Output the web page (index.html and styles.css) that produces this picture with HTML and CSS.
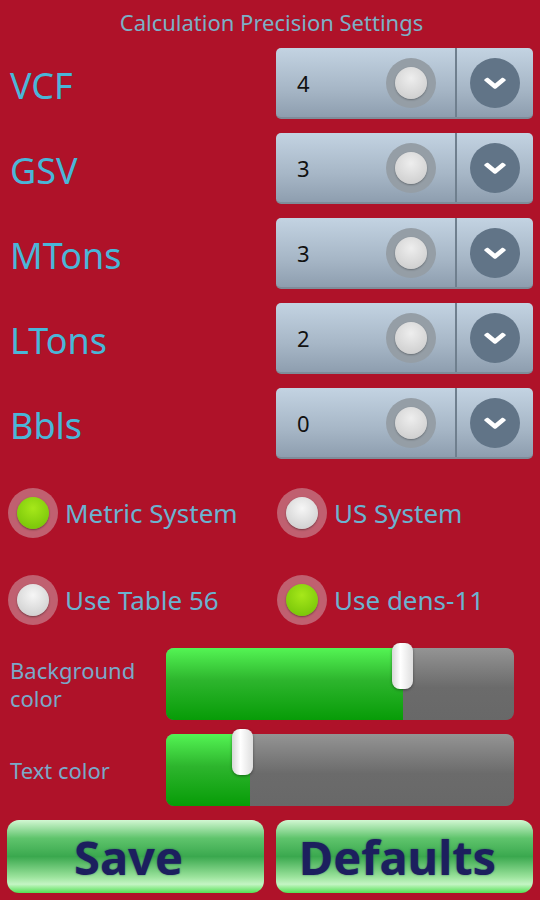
FILE: index.html
```html
<!DOCTYPE html>
<html lang="en">
<head>
    <meta charset="UTF-8">
    <meta name="viewport" content="width=device-width, initial-scale=1.0">
    <title>Precision Settings</title>
    <link rel="stylesheet" href="styles.css">
</head>
<body>
    <div class="screen">
        <h1 class="title">Calculation Precision Settings</h1>

        <!-- Precision spinners -->
        <div class="precision-list">
            <div class="precision-row">
                <span class="precision-label">VCF</span>
                <div class="spinner">
                    <span class="spinner-value">4</span>
                    <span class="spinner-knob"><span class="knob-inner"></span></span>
                    <span class="spinner-arrow">
                        <svg width="24" height="14" viewBox="0 0 24 14"><path d="M3 3 L12 10.5 L21 3" fill="none" stroke="#fff" stroke-width="4.5" stroke-linecap="round" stroke-linejoin="round"/></svg>
                    </span>
                </div>
            </div>
            <div class="precision-row">
                <span class="precision-label">GSV</span>
                <div class="spinner">
                    <span class="spinner-value">3</span>
                    <span class="spinner-knob"><span class="knob-inner"></span></span>
                    <span class="spinner-arrow">
                        <svg width="24" height="14" viewBox="0 0 24 14"><path d="M3 3 L12 10.5 L21 3" fill="none" stroke="#fff" stroke-width="4.5" stroke-linecap="round" stroke-linejoin="round"/></svg>
                    </span>
                </div>
            </div>
            <div class="precision-row">
                <span class="precision-label">MTons</span>
                <div class="spinner">
                    <span class="spinner-value">3</span>
                    <span class="spinner-knob"><span class="knob-inner"></span></span>
                    <span class="spinner-arrow">
                        <svg width="24" height="14" viewBox="0 0 24 14"><path d="M3 3 L12 10.5 L21 3" fill="none" stroke="#fff" stroke-width="4.5" stroke-linecap="round" stroke-linejoin="round"/></svg>
                    </span>
                </div>
            </div>
            <div class="precision-row">
                <span class="precision-label">LTons</span>
                <div class="spinner">
                    <span class="spinner-value">2</span>
                    <span class="spinner-knob"><span class="knob-inner"></span></span>
                    <span class="spinner-arrow">
                        <svg width="24" height="14" viewBox="0 0 24 14"><path d="M3 3 L12 10.5 L21 3" fill="none" stroke="#fff" stroke-width="4.5" stroke-linecap="round" stroke-linejoin="round"/></svg>
                    </span>
                </div>
            </div>
            <div class="precision-row">
                <span class="precision-label">Bbls</span>
                <div class="spinner">
                    <span class="spinner-value">0</span>
                    <span class="spinner-knob"><span class="knob-inner"></span></span>
                    <span class="spinner-arrow">
                        <svg width="24" height="14" viewBox="0 0 24 14"><path d="M3 3 L12 10.5 L21 3" fill="none" stroke="#fff" stroke-width="4.5" stroke-linecap="round" stroke-linejoin="round"/></svg>
                    </span>
                </div>
            </div>
        </div>

        <!-- Radio groups -->
        <div class="radio-row">
            <label class="radio"><span class="radio-ring"><span class="radio-dot checked"></span></span>Metric System</label>
            <label class="radio"><span class="radio-ring"><span class="radio-dot"></span></span>US System</label>
        </div>
        <div class="radio-row second">
            <label class="radio"><span class="radio-ring"><span class="radio-dot"></span></span>Use Table 56</label>
            <label class="radio"><span class="radio-ring"><span class="radio-dot checked"></span></span>Use dens-11</label>
        </div>

        <!-- Colour sliders -->
        <div class="slider-row">
            <span class="slider-label">Background<br>color</span>
            <div class="slider">
                <div class="slider-fill" style="width: 68%"></div>
                <div class="slider-thumb" style="left: 65%"></div>
            </div>
        </div>
        <div class="slider-row">
            <span class="slider-label">Text color</span>
            <div class="slider">
                <div class="slider-fill" style="width: 24%"></div>
                <div class="slider-thumb" style="left: 19%"></div>
            </div>
        </div>

        <div class="button-row">
            <button class="big-button">Save</button>
            <button class="big-button">Defaults</button>
        </div>
    </div>
</body>
</html>
```

FILE: styles.css
```css
body {
    margin: 0;
    background-color: #af1229;
    font-family: 'Noto Sans', 'Open Sans', sans-serif;
}
.screen {
    width: 540px;
    height: 900px;
    padding: 0 7px 0 10px;
    box-sizing: border-box;
    overflow: hidden;
}
.title {
    margin: 0;
    height: 48px;
    line-height: 44px;
    font-size: 22px;
    font-weight: normal;
    text-align: center;
    color: #7cb0c6;
}
.precision-list {
    display: flex;
    flex-direction: column;
    gap: 14px;
}
.precision-row {
    display: flex;
    align-items: center;
    justify-content: space-between;
    height: 71px;
}
.precision-label {
    font-size: 36px;
    color: #4ab6d8;
    padding-top: 4px;
}
.spinner {
    width: 257px;
    height: 71px;
    box-sizing: border-box;
    border-radius: 5px;
    background: linear-gradient(#c3d3e2, #a6b6c6 60%, #8e9eaf);
    border-bottom: 2px solid #7f8c99;
    display: flex;
    align-items: center;
}
.spinner-value {
    width: 110px;
    box-sizing: border-box;
    padding-left: 21px;
    font-size: 22px;
    color: #111;
}
.spinner-knob {
    width: 50px;
    height: 50px;
    border-radius: 50%;
    background-color: #959ea6;
    display: flex;
    align-items: center;
    justify-content: center;
}
.knob-inner {
    width: 32px;
    height: 32px;
    border-radius: 50%;
    background: radial-gradient(circle at 50% 35%, #eeeeee, #c8c8c8);
    box-shadow: 0 1px 2px rgba(0, 0, 0, 0.3);
}
.spinner-arrow {
    margin-left: 19px;
    border-left: 2px solid #6f7f8e;
    height: 100%;
    flex: 1;
    display: flex;
    align-items: center;
    justify-content: center;
}
.spinner-arrow svg {
    width: 50px;
    height: 50px;
    padding: 18px 13px;
    box-sizing: border-box;
    border-radius: 50%;
    background-color: #617487;
}
.radio-row {
    display: flex;
    margin-top: 28px;
    height: 52px;
}
.radio-row.second {
    margin-top: 35px;
}
.radio {
    display: flex;
    align-items: center;
    flex: 1;
    font-size: 26px;
    color: #6bb3d0;
}
.radio:first-child {
    flex: 0 0 269px;
}
.radio-ring {
    width: 50px;
    height: 50px;
    border-radius: 50%;
    background-color: #c06070;
    margin-left: -2px;
    margin-right: 7px;
    display: flex;
    align-items: center;
    justify-content: center;
}
.radio-dot {
    width: 32px;
    height: 32px;
    border-radius: 50%;
    background: radial-gradient(circle at 50% 35%, #f6f6f6, #c8c8c8);
    box-shadow: 0 1px 2px rgba(0, 0, 0, 0.4);
}
.radio-dot.checked {
    background: radial-gradient(circle at 50% 35%, #a6e81a, #6fbe05);
}
.slider-row {
    display: flex;
    align-items: center;
    margin-top: 14px;
}
.radio-row.second + .slider-row {
    margin-top: 22px;
}
.slider-label {
    width: 156px;
    font-size: 22px;
    line-height: 28px;
    color: #7aa9c8;
}
.slider {
    position: relative;
    width: 348px;
    height: 72px;
    border-radius: 8px;
    background: linear-gradient(#949494, #6b6b6b 55%, #686868);
}
.slider-fill {
    height: 100%;
    border-radius: 8px 0 0 8px;
    background: linear-gradient(#54f454, #2db52d 45%, #079c07);
}
.slider-thumb {
    position: absolute;
    top: -5px;
    width: 21px;
    height: 46px;
    border-radius: 8px;
    background: linear-gradient(90deg, #d8d8d8, #ffffff 40%, #dedede);
    box-shadow: 0 1px 3px rgba(0, 0, 0, 0.4);
}
.button-row {
    display: flex;
    gap: 12px;
    margin-top: 14px;
    margin-left: -3px;
}
.big-button {
    width: 257px;
    height: 73px;
    border: none;
    border-radius: 12px;
    background: linear-gradient(#d2f7d2, #5fc46c 25%, #3aa84e 50%, #9be39c 78%, #c4f5c4 88%, #52e052);
    font-family: 'Noto Sans', 'Open Sans', sans-serif;
    font-weight: bold;
    font-size: 47px;
    color: #1c1f5e;
    text-shadow: 0 0 2px rgba(28, 31, 94, 0.6);
    padding: 0 14px 0 0;
}
```
